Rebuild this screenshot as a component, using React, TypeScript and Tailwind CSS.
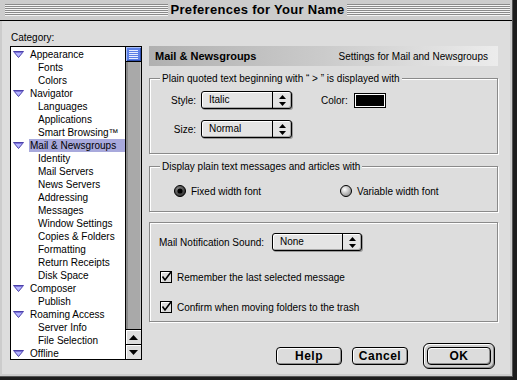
import React from 'react';

type Item = { label: string; level: 0 | 1; selected?: boolean };

const categories: Item[] = [
  { label: 'Appearance', level: 0 },
  { label: 'Fonts', level: 1 },
  { label: 'Colors', level: 1 },
  { label: 'Navigator', level: 0 },
  { label: 'Languages', level: 1 },
  { label: 'Applications', level: 1 },
  { label: 'Smart Browsing™', level: 1 },
  { label: 'Mail & Newsgroups', level: 0, selected: true },
  { label: 'Identity', level: 1 },
  { label: 'Mail Servers', level: 1 },
  { label: 'News Servers', level: 1 },
  { label: 'Addressing', level: 1 },
  { label: 'Messages', level: 1 },
  { label: 'Window Settings', level: 1 },
  { label: 'Copies & Folders', level: 1 },
  { label: 'Formatting', level: 1 },
  { label: 'Return Receipts', level: 1 },
  { label: 'Disk Space', level: 1 },
  { label: 'Composer', level: 0 },
  { label: 'Publish', level: 1 },
  { label: 'Roaming Access', level: 0 },
  { label: 'Server Info', level: 1 },
  { label: 'File Selection', level: 1 },
  { label: 'Offline', level: 0 },
];

const Disclosure = () => (
  <svg width="11" height="7" viewBox="0 0 11 7" className="ml-[2px]">
    <polygon points="0.5,0.5 10.5,0.5 5.5,6.5" fill="#b4b4ff" stroke="#4a3fa8" strokeWidth="1" />
    <line x1="1.5" y1="1.5" x2="9.5" y2="1.5" stroke="#7b72d8" />
  </svg>
);

const Stripes = () => (
  <div className="flex-1 h-[12px] bg-[image:repeating-linear-gradient(to_bottom,#8a8a8a_0px,#8a8a8a_1px,#f4f4f4_1px,#f4f4f4_2px)]" />
);

const Popup = ({ value, width }: { value: string; width: string }) => (
  <div className={`${width} h-[18px] flex rounded-[3px] border border-black bg-[#e4e4e4] shadow-[inset_1px_1px_0_#ffffff,inset_-1px_-1px_0_#a8a8a8,1px_1px_0_#9a9a9a]`}>
    <span className="flex-1 pl-[7px] text-[10px] leading-[16px] text-black">{value}</span>
    <span className="w-[19px] border-l border-black flex items-center justify-center">
      <svg width="7" height="11" viewBox="0 0 7 11">
        <polygon points="3.5,0 7,4 0,4" fill="#000" />
        <polygon points="0,7 7,7 3.5,11" fill="#000" />
      </svg>
    </span>
  </div>
);

const GroupBox = ({ title, className, children }: { title?: string; className: string; children?: React.ReactNode }) => (
  <div className={`relative border border-[#8a8a8a] shadow-[1px_1px_0_#ffffff,inset_1px_1px_0_#ffffff] ${className}`}>
    {title && (
      <span className="absolute -top-[7px] left-[10px] px-[2px] bg-[#dddddd] text-[10px] leading-[13px] text-black whitespace-nowrap">
        {title}
      </span>
    )}
    {children}
  </div>
);

const Radio = ({ checked }: { checked?: boolean }) => (
  <svg width="12" height="12" viewBox="0 0 12 12">
    <defs>
      <radialGradient id={checked ? 'rOn' : 'rOff'} cx="0.38" cy="0.35" r="0.7">
        <stop offset="0" stopColor={checked ? '#8a8a8a' : '#ffffff'} />
        <stop offset="1" stopColor={checked ? '#2a2a2a' : '#8c8c8c'} />
      </radialGradient>
    </defs>
    <circle cx="6" cy="6" r="5.5" fill={`url(#${checked ? 'rOn' : 'rOff'})`} stroke="#000" />
    {checked && <circle cx="6" cy="6" r="2.6" fill="#000" />}
  </svg>
);

const Checkbox = () => (
  <svg width="13" height="12" viewBox="0 0 13 12">
    <rect x="0.5" y="0.5" width="11" height="11" fill="#dcdcdc" stroke="#000" />
    <line x1="1.5" y1="1.5" x2="10.5" y2="1.5" stroke="#fff" />
    <line x1="1.5" y1="1.5" x2="1.5" y2="10.5" stroke="#fff" />
    <path d="M2.5 5.5 L5 9 L11 1" fill="none" stroke="#000" strokeWidth="1.6" />
  </svg>
);

const Button = ({ label, width }: { label: string; width: string }) => (
  <div className={`${width} h-[18px] rounded-[4px] border border-black bg-[#dcdcdc] shadow-[inset_1px_1px_0_#ffffff,inset_-1px_-1px_0_#8e8e8e] flex items-center justify-center text-[12px] font-bold tracking-[0.5px] text-black`}>
    {label}
  </div>
);

export default function App() {
  return (
    <div className="w-[517px] h-[380px] bg-[#1c1c1c] overflow-hidden font-['Liberation_Sans',Arial,sans-serif] text-black">
      <div className="w-[513px] h-[377px] bg-[#cccccc] border-r border-b border-[#555] flex flex-col">
        {/* title bar */}
        <div className="h-[21px] shrink-0 flex items-center pl-[5px] pr-[2px] border-b border-black">
          <Stripes />
          <span className="px-[3px] text-[13px] font-bold leading-[16px] tracking-[0.3px] whitespace-nowrap">
            Preferences for Your Name
          </span>
          <Stripes />
        </div>

        <div className="flex-1 px-[2px] pb-[2px]">
          <div className="h-full bg-[#dddddd] flex pl-[8px] pt-[10px] gap-[7px]">
            {/* category list */}
            <div className="w-[132px] flex flex-col">
              <div className="h-[13px] leading-[13px] text-[10px] mb-[2px] pl-[1px]">Category:</div>
              <div className="h-[314px] border border-black bg-white flex">
                <div className="flex-1 flex flex-col pt-[1px]">
                  {categories.map((c) => (
                    <div key={c.label} className="h-[13px] flex items-center shrink-0">
                      <span className={c.level === 0 ? 'w-[18px] flex items-center' : 'w-[26px]'}>
                        {c.level === 0 && <Disclosure />}
                      </span>
                      <span
                        className={`flex-1 h-full pl-[1px] text-[10px] leading-[13px] whitespace-nowrap ${c.selected ? 'bg-[#a8a9dc]' : ''}`}
                      >
                        {c.label}
                      </span>
                    </div>
                  ))}
                </div>
                <div className="w-[16px] border-l border-black flex flex-col">
                  <div className="h-[15px] border-b border-black bg-[#5b7fe6] shadow-[inset_1px_1px_0_#a9bff7,inset_-1px_-1px_0_#2f4fb0] flex items-center justify-center">
                    <svg width="9" height="9" viewBox="0 0 9 9">
                      {[0.5, 2.5, 4.5, 6.5, 8.5].map((y) => (
                        <line key={y} x1="0" y1={y} x2="9" y2={y} stroke="#e8eeff" />
                      ))}
                    </svg>
                  </div>
                  <div className="flex-1 bg-[#a9a9a9] shadow-[inset_2px_0_0_#8a8a8a,inset_-1px_0_0_#c4c4c4]" />
                  <div className="h-[15px] border-t border-black bg-[#dddddd] shadow-[inset_1px_1px_0_#ffffff] flex items-center justify-center">
                    <svg width="9" height="5" viewBox="0 0 9 5">
                      <polygon points="4.5,0 9,5 0,5" fill="#000" />
                    </svg>
                  </div>
                  <div className="h-[15px] border-t border-black bg-[#dddddd] shadow-[inset_1px_1px_0_#ffffff] flex items-center justify-center">
                    <svg width="9" height="5" viewBox="0 0 9 5">
                      <polygon points="0,0 9,0 4.5,5" fill="#000" />
                    </svg>
                  </div>
                </div>
              </div>
            </div>

            {/* settings pane */}
            <div className="w-[349px] flex flex-col pt-[15px]">
              <div className="h-[20px] flex items-center justify-between pl-[6px] pr-[10px] bg-linear-to-r from-[#b0b0b0] via-[#cbcbcb] to-[#ececec]">
                <span className="text-[11px] font-bold">Mail &amp; Newsgroups</span>
                <span className="text-[10px]">Settings for Mail and Newsgroups</span>
              </div>

              <GroupBox title="Plain quoted text beginning with “ > ” is displayed with" className="mt-[12px] h-[76px] pt-[12px]">
                <div className="flex items-center h-[18px]">
                  <span className="w-[46px] text-right text-[10px]">Style:</span>
                  <div className="ml-[5px]">
                    <Popup value="Italic" width="w-[91px]" />
                  </div>
                  <span className="ml-[29px] text-[10px]">Color:</span>
                  <div className="ml-[6px] w-[32px] h-[15px] border border-black bg-white p-[1px]">
                    <div className="w-full h-full bg-black" />
                  </div>
                </div>
                <div className="flex items-center h-[18px] mt-[11px]">
                  <span className="w-[46px] text-right text-[10px]">Size:</span>
                  <div className="ml-[5px]">
                    <Popup value="Normal" width="w-[91px]" />
                  </div>
                </div>
              </GroupBox>

              <GroupBox title="Display plain text messages and articles with" className="mt-[12px] h-[46px] pt-[18px] pl-[24px]">
                <div className="flex items-center h-[12px] text-[10px]">
                  <div className="w-[166px] flex items-center gap-[5px]">
                    <Radio checked />
                    <span>Fixed width font</span>
                  </div>
                  <div className="flex items-center gap-[5px]">
                    <Radio />
                    <span>Variable width font</span>
                  </div>
                </div>
              </GroupBox>

              <GroupBox className="mt-[10px] h-[100px] pt-[10px] pl-[9px] text-[10px]">
                <div className="flex items-center h-[18px]">
                  <span className="w-[113px] whitespace-nowrap">Mail Notification Sound:</span>
                  <Popup value="None" width="w-[90px]" />
                </div>
                <div className="flex items-center h-[12px] mt-[20px] ml-[1px] gap-[4px]">
                  <Checkbox />
                  <span>Remember the last selected message</span>
                </div>
                <div className="flex items-center h-[12px] mt-[18px] ml-[1px] gap-[4px]">
                  <Checkbox />
                  <span>Confirm when moving folders to the trash</span>
                </div>
              </GroupBox>

              <div className="mt-[21px] h-[26px] flex items-center justify-end pr-[3px]">
                <Button label="Help" width="w-[66px]" />
                <div className="ml-[10px]">
                  <Button label="Cancel" width="w-[56px]" />
                </div>
                <div className="ml-[15px] w-[72px] h-[26px] rounded-[6px] border border-black bg-[#cfcfcf] shadow-[inset_1px_1px_0_#ffffff,inset_-1px_-1px_0_#8e8e8e] p-[3px]">
                  <Button label="OK" width="w-full" />
                </div>
              </div>
            </div>
          </div>
        </div>
      </div>
    </div>
  );
}
